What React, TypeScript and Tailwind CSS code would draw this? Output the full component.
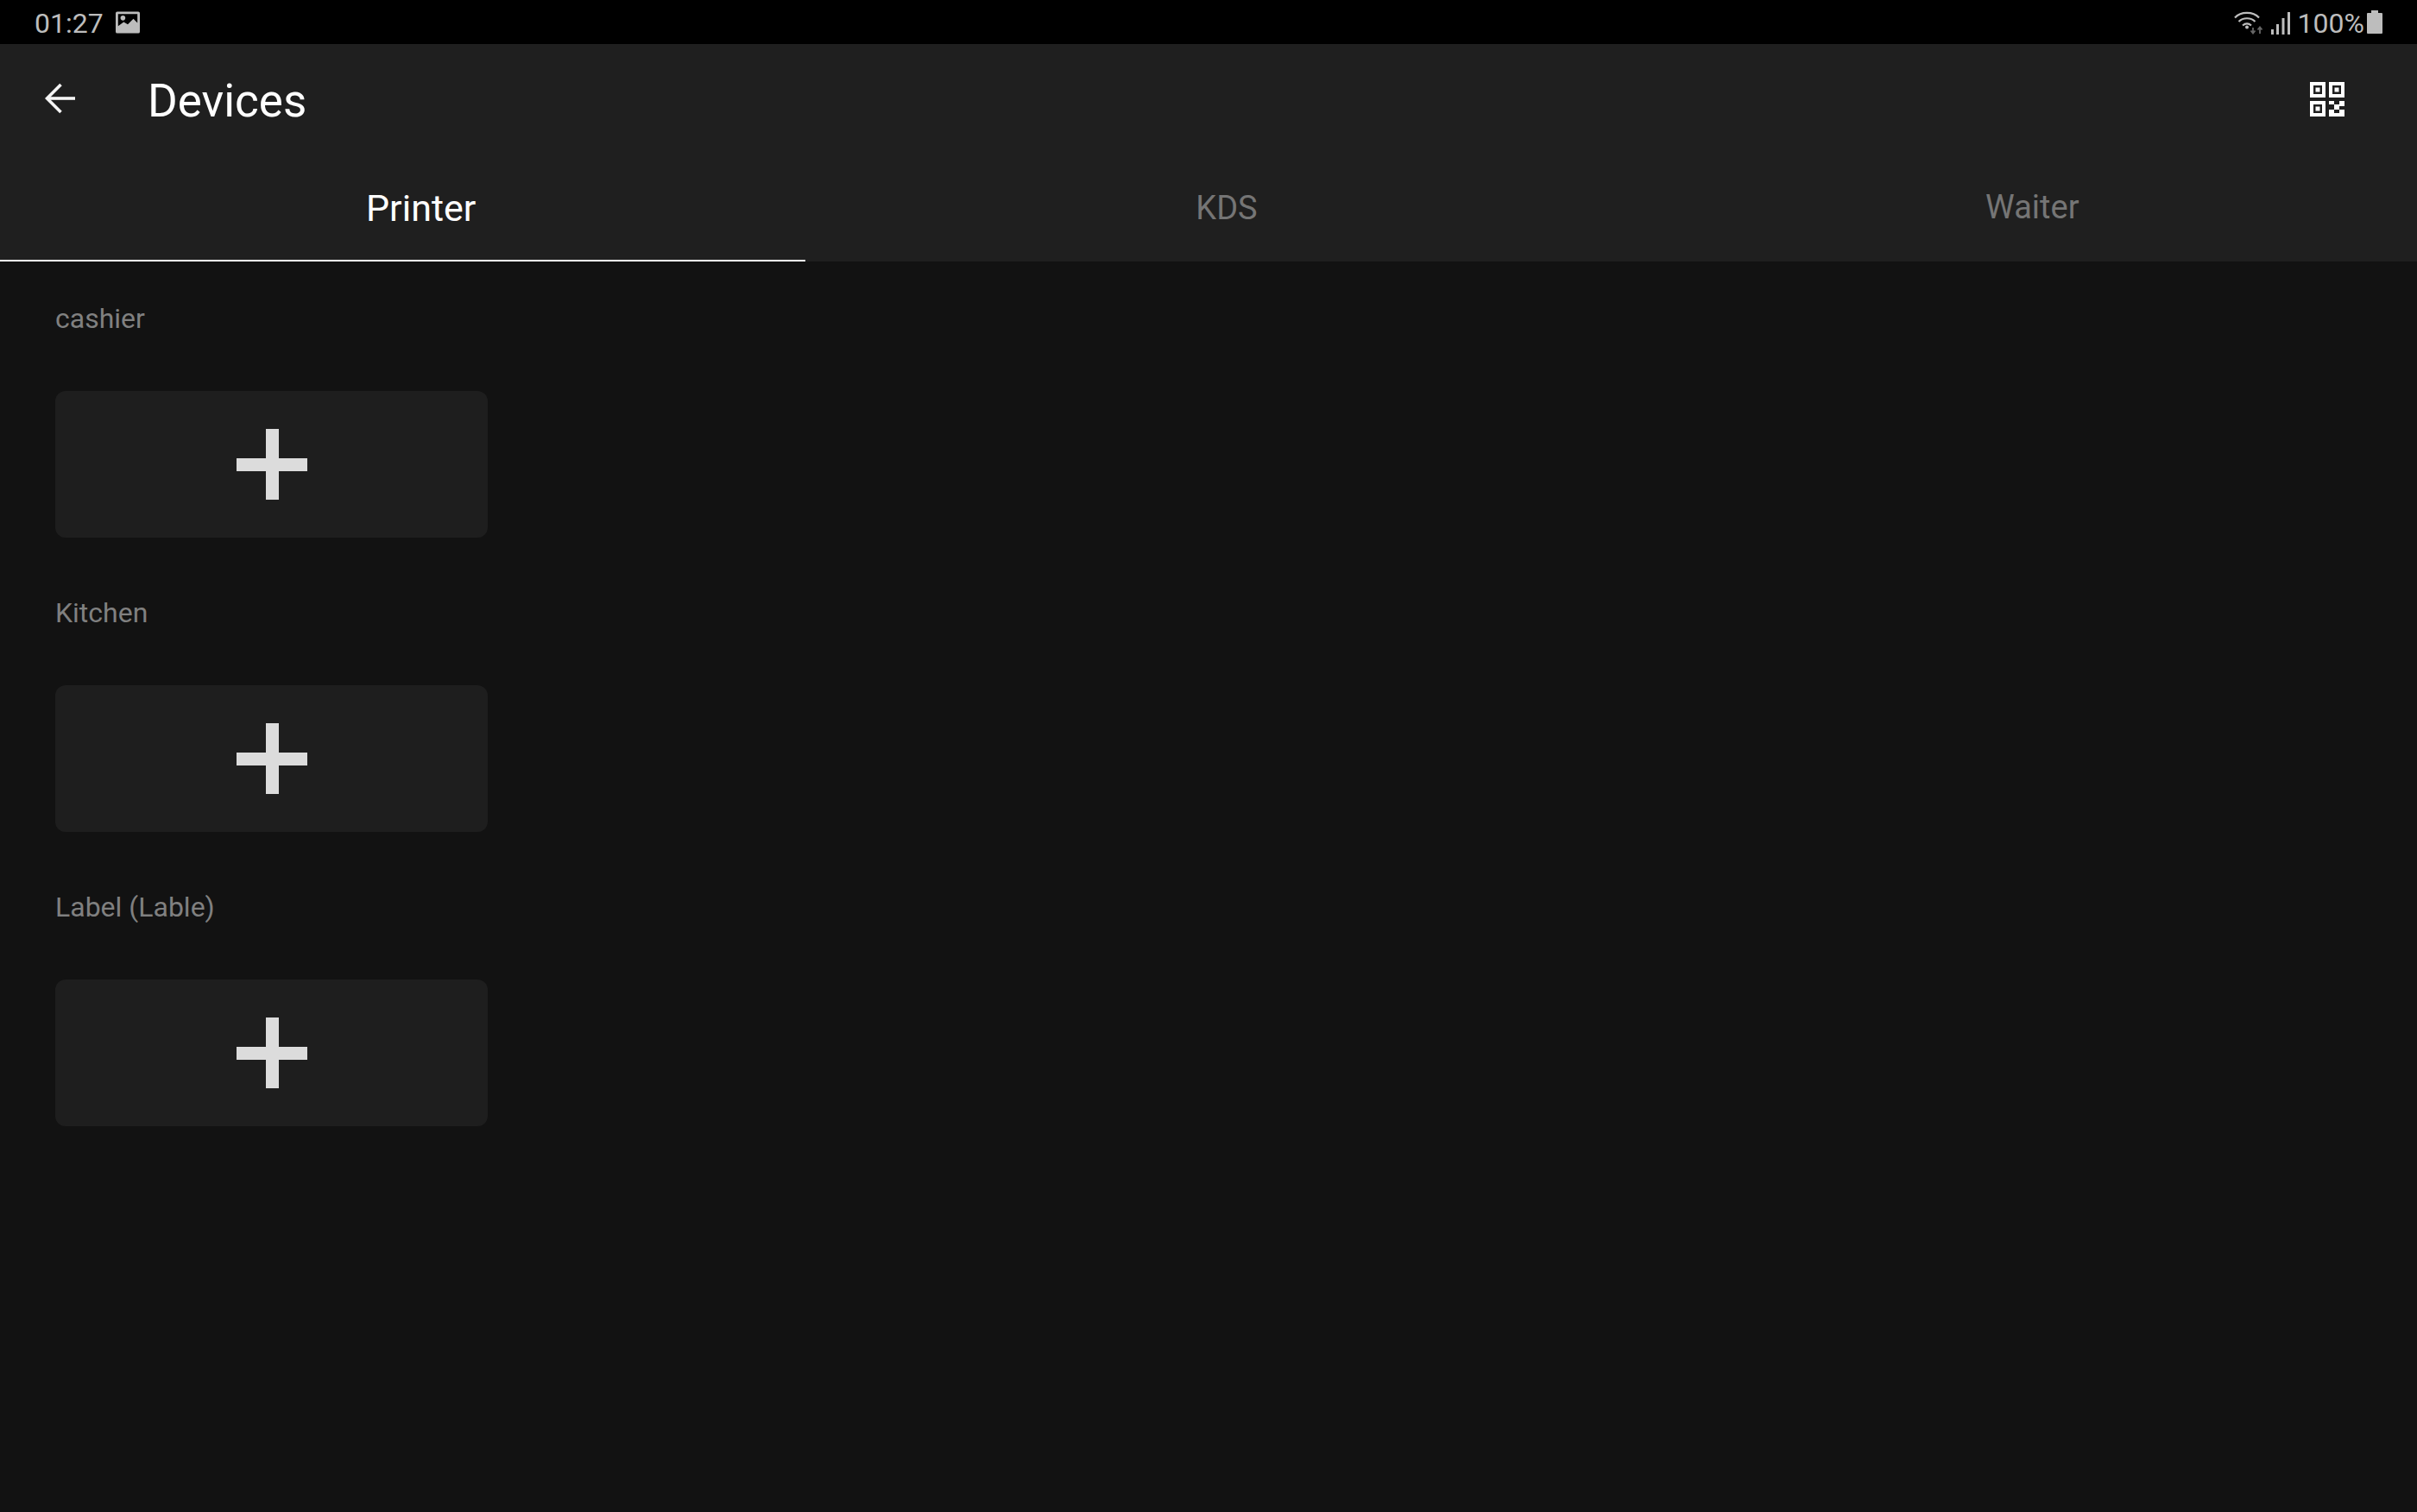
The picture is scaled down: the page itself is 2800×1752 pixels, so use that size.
import React from 'react'

const BackArrow = () => (
    <svg width="36" height="36" viewBox="0 0 36 36" fill="none" stroke="#f5f5f5" strokeWidth="3.6">
        <path d="M35 18H3" />
        <path d="M18.5 2L2.5 18l16 16" />
    </svg>
)

const QrIcon = () => (
    <svg width="40" height="40" viewBox="0 0 40 40" fill="#fff">
        <path fillRule="evenodd" d="M0 0h18v18H0zM4 4v10h10V4zM22 0h18v18H22zM26 4v10h10V4zM0 22h18v18H0zM4 26v10h10V26z" />
        <rect x="6.5" y="6.5" width="5" height="5" />
        <rect x="28.5" y="6.5" width="5" height="5" />
        <rect x="6.5" y="28.5" width="5" height="5" />
        <path d="M22 22h6v4h-6zM34 22h6v6h-6zM28 26h6v6h-6zM22 32h6v8h-6zM34 32h6v8h-6zM28 36h6v4h-6z" />
    </svg>
)

const StatusIcons = () => (
    <div className="flex items-end gap-[9px]">
        <svg width="34" height="28" viewBox="0 0 34 28" fill="none" stroke="#bdbdbd" strokeWidth="2.2">
            <path d="M1 8.5C8 1 22 1 29 8.5" />
            <path d="M5.5 13C10.5 8 19.5 8 24.5 13" />
            <path d="M10 17.5C13 15 17 15 20 17.5" />
            <circle cx="15" cy="19.5" r="2" fill="#bdbdbd" stroke="none" />
            <path d="M22 20v6M19.5 23.5l2.5 3 2.5-3" stroke="#666" strokeWidth="1.8" />
            <path d="M30 27v-7M27.5 22.5l2.5-3 2.5 3" stroke="#666" strokeWidth="1.8" />
        </svg>
        <svg width="22" height="26" viewBox="0 0 22 26" fill="#bdbdbd">
            <rect x="0" y="20" width="3" height="6" />
            <rect x="6" y="14" width="3" height="12" />
            <rect x="12.5" y="7" width="3" height="19" />
            <rect x="19" y="0" width="3" height="26" />
        </svg>
    </div>
)

const AddCard = () => (
    <div className="flex items-center justify-center w-[501px] h-[170px] rounded-[12px] bg-[#1e1e1e]">
        <svg width="82" height="82" viewBox="0 0 82 82" fill="#dcdcdc">
            <rect x="34" y="0" width="15" height="82" />
            <rect x="0" y="34" width="82" height="15" />
        </svg>
    </div>
)

const Section = ({ label }: { label: string }) => (
    <div className="h-[341px]">
        <div className="h-[150px] pt-[45px] text-[32px] leading-[42px] text-[#808080]">{label}</div>
        <AddCard />
    </div>
)

export default function App() {
    return (
        <div className="w-[2800px] h-[1752px] flex flex-col bg-[#121212] font-['Roboto',sans-serif]">
            <div className="h-[51px] bg-black flex items-center justify-between pl-[40px] pr-[40px] text-[32px] text-[#bdbdbd]">
                <div className="flex items-center gap-[14px]">
                    <span className="pt-[2px]">01:27</span>
                    <svg width="28" height="26" viewBox="0 0 30 27" fill="#bdbdbd">
                        <path fillRule="evenodd" d="M2 0h26a2 2 0 012 2v23a2 2 0 01-2 2H2a2 2 0 01-2-2V2a2 2 0 012-2zM3 3v15l7-5 5 3 7-7 5 5V3z" />
                        <circle cx="9" cy="8" r="3" />
                    </svg>
                </div>
                <div className="flex items-center gap-[3px]">
                    <StatusIcons />
                    <span className="ml-[6px] pt-[2px]">100%</span>
                    <svg width="18" height="27" viewBox="0 0 18 27" fill="#bdbdbd">
                        <path d="M5 0h8v3h4a1 1 0 011 1v22a1 1 0 01-1 1H1a1 1 0 01-1-1V4a1 1 0 011-1h4z" />
                    </svg>
                </div>
            </div>
            <div className="bg-[#1f1f1f] h-[252px] flex flex-col">
                <div className="h-[129px] flex items-center justify-between pl-[52px] pr-[84px]">
                    <div className="flex items-center">
                        <div className="mb-[3px]">
                            <BackArrow />
                        </div>
                        <h1 className="ml-[83px] pt-[2px] text-[53px] leading-[64px] text-white font-normal">Devices</h1>
                    </div>
                    <div className="mb-[2px]">
                        <QrIcon />
                    </div>
                </div>
                <div className="flex flex-1">
                    <div className="w-1/3 flex items-center justify-center text-[43px] text-white border-b-[2px] border-white pl-[42px] pt-[2px]">Printer</div>
                    <div className="w-1/3 flex items-center justify-center text-[38px] text-[#757575] pl-[42px]">KDS</div>
                    <div className="w-1/3 flex items-center justify-center text-[38px] text-[#757575] pl-[42px] pb-[3px]">Waiter</div>
                </div>
            </div>
            <div className="pl-[64px]">
                <Section label="cashier" />
                <Section label="Kitchen" />
                <Section label="Label (Lable)" />
            </div>
        </div>
    )
}
